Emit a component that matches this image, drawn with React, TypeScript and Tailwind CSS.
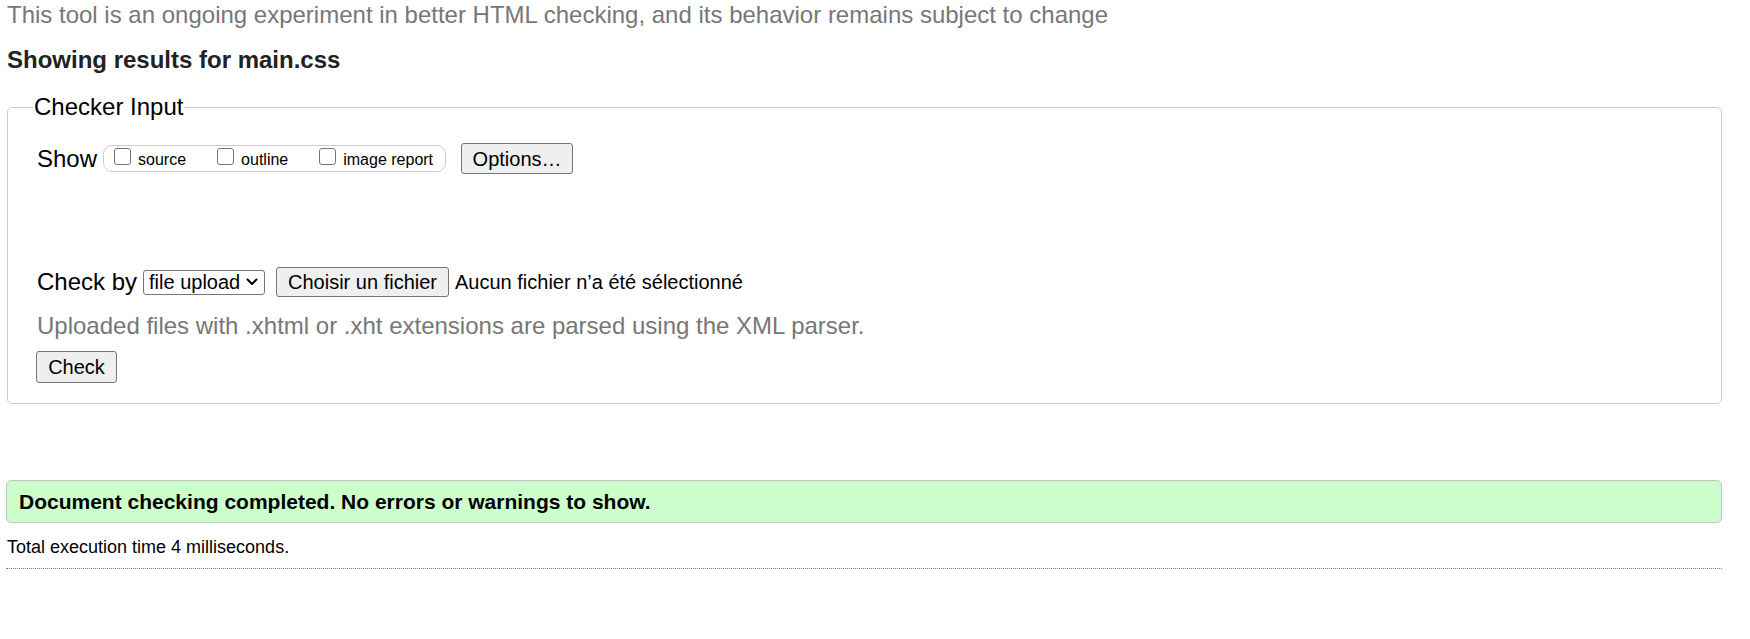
import React from 'react';

const fontStack = "font-['Liberation_Sans',Arial,sans-serif]";

function Checkbox({ label }: { label: string }) {
  return (
    <label className="flex items-center">
      <span className="w-[17px] h-[17px] mb-[4px] rounded-[3px] border border-[#767676] bg-white shrink-0"></span>
      <span className="ml-[7px] mt-[3px] text-[16px] leading-[18px] text-black">{label}</span>
    </label>
  );
}

export default function App() {
  return (
    <div className={`${fontStack} bg-white min-h-[639px] text-black`}>
      <p className="mt-[1px] pl-[7px] text-[24px] leading-[28px] text-[#777]">
        This tool is an ongoing experiment in better HTML checking, and its behavior remains subject to change
      </p>

      <h2 className="mt-[17px] pl-[7px] text-[24px] leading-[28px] font-bold text-[#222]">
        Showing results for main.css
      </h2>

      {/* Checker Input */}
      <fieldset className="mt-[19px] ml-[7px] w-[1715px] border border-[#ccc] rounded-[5px] p-0">
        <legend className="ml-[25px] px-[1px] text-[24px] leading-[28px]">Checker Input</legend>
        <div className="pl-[29px] pt-[22px] pb-[20px]">
          {/* Show row */}
          <div className="flex items-center h-[31px]">
            <span className="text-[24px] leading-[28px]">Show</span>
            <div className="ml-[6px] flex items-center gap-[31px] h-[27px] pl-[10px] pr-[12px] border border-[#ccc] rounded-[9px]">
              <Checkbox label="source" />
              <Checkbox label="outline" />
              <Checkbox label="image report" />
            </div>
            <button className="ml-[15px] w-[112px] h-[31px] bg-[#efefef] border border-[#767676] rounded-[3px] text-[20px] leading-[24px]">
              Options…
            </button>
          </div>

          {/* Check by row */}
          <div className="mt-[93px] flex items-center h-[30px]">
            <span className="text-[24px] leading-[28px]">Check by</span>
            <div className="ml-[6px] flex items-center justify-between w-[122px] h-[25px] pl-[5px] pr-[6px] border border-[#767676] rounded-[3px] bg-white">
              <span className="text-[20px] leading-[22px]">file upload</span>
              <svg width="12" height="8" viewBox="0 0 12 8" fill="none">
                <path d="M1.5 1.5L6 6L10.5 1.5" stroke="#000" strokeWidth="2" strokeLinecap="round" strokeLinejoin="round" />
              </svg>
            </div>
            <button className="ml-[11px] h-[30px] px-[11px] bg-[#efefef] border border-[#767676] rounded-[3px] text-[20px] leading-[24px]">
              Choisir un fichier
            </button>
            <span className="ml-[6px] text-[20px] leading-[24px]">Aucun fichier n’a été sélectionné</span>
          </div>

          <p className="mt-[15px] text-[24px] leading-[28px] text-[#777]">
            Uploaded files with .xhtml or .xht extensions are parsed using the XML parser.
          </p>

          <button className="mt-[11px] -ml-[1px] w-[81px] h-[32px] bg-[#efefef] border border-[#767676] rounded-[3px] text-[20px] leading-[24px]">
            Check
          </button>
        </div>
      </fieldset>

      {/* Result */}
      <div className="mt-[76px] ml-[6px] w-[1716px] h-[43px] flex items-center pl-[12px] bg-[#ccffcc] border border-[#c4c4c4] rounded-[5px]">
        <span className="text-[21px] leading-[24px] font-bold">
          Document checking completed. No errors or warnings to show.
        </span>
      </div>

      <p className="mt-[14px] pl-[7px] text-[18px] leading-[20px]">Total execution time 4 milliseconds.</p>

      <div className="mt-[11px] ml-[6px] w-[1716px] border-t border-dotted border-[#777]"></div>
    </div>
  );
}
